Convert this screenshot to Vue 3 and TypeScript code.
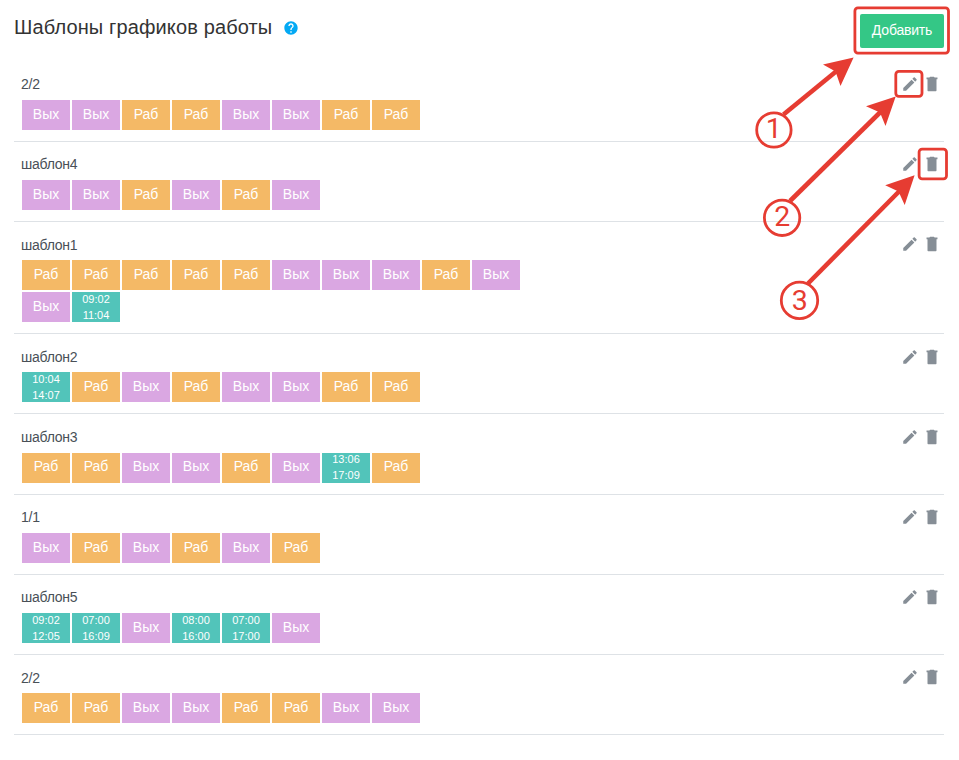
<script setup lang="ts">
type Shift = string

interface Template {
  name: string
  shifts: Shift[]
}

const OFF = 'Вых'
const WORK = 'Раб'

const templates: Template[] = [
  { name: '2/2', shifts: [OFF, OFF, WORK, WORK, OFF, OFF, WORK, WORK] },
  { name: 'шаблон4', shifts: [OFF, OFF, WORK, OFF, WORK, OFF] },
  {
    name: 'шаблон1',
    shifts: [WORK, WORK, WORK, WORK, WORK, OFF, OFF, OFF, WORK, OFF, OFF, '09:02 11:04'],
  },
  { name: 'шаблон2', shifts: ['10:04 14:07', WORK, OFF, WORK, OFF, OFF, WORK, WORK] },
  { name: 'шаблон3', shifts: [WORK, WORK, OFF, OFF, WORK, OFF, '13:06 17:09', WORK] },
  { name: '1/1', shifts: [OFF, WORK, OFF, WORK, OFF, WORK] },
  {
    name: 'шаблон5',
    shifts: ['09:02 12:05', '07:00 16:09', OFF, '08:00 16:00', '07:00 17:00', OFF],
  },
  { name: '2/2', shifts: [WORK, WORK, OFF, OFF, WORK, WORK, OFF, OFF] },
]

function kind(shift: Shift): string {
  if (shift === OFF) return 'off'
  if (shift === WORK) return 'work'
  return 'time'
}
</script>

<template>
  <main class="page">
    <header class="header">
      <h1 class="title">Шаблоны графиков работы</h1>
      <svg class="help" viewBox="0 0 24 24">
        <path
          d="M12 2C6.48 2 2 6.48 2 12s4.48 10 10 10 10-4.48 10-10S17.520 2 12 2zm1 17h-2v-2h2v2zm2.070-7.750l-.9.920C13.450 12.900 13 13.500 13 15h-2v-.5c0-1.100.450-2.100 1.170-2.830l1.240-1.260c.370-.360.590-.860.590-1.410 0-1.100-.9-2-2-2s-2 .9-2 2H8c0-2.210 1.790-4 4-4s4 1.790 4 4c0 .880-.360 1.680-.930 2.250z"
        />
      </svg>
      <button class="add" type="button">Добавить</button>
    </header>

    <ul class="list">
      <li v-for="(item, i) in templates" :key="i" class="row">
        <div class="info">
          <div class="name">{{ item.name }}</div>
          <div class="shifts">
            <div v-for="(shift, j) in item.shifts" :key="j" class="shift" :class="kind(shift)">
              <span v-for="part in shift.split(' ')" :key="part">{{ part }}</span>
            </div>
          </div>
        </div>
        <div class="actions">
          <svg class="icon" viewBox="0 0 24 24">
            <path
              d="M3 17.250V21h3.750L17.810 9.940l-3.750-3.750L3 17.250zM20.710 7.040c.390-.390.390-1.020 0-1.410l-2.340-2.340c-.390-.390-1.020-.390-1.410 0l-1.830 1.830 3.750 3.750 1.830-1.830z"
            />
          </svg>
          <svg class="icon" viewBox="0 0 24 24">
            <path
              d="M6 20.500c0 .6.400 1 1 1h10c.6 0 1-.4 1-1V5.500H6v15zM19.300 3.300h-3.800l-1-1h-5l-1 1H4.700v2.500h14.600V3.300z"
            />
          </svg>
        </div>
      </li>
    </ul>

    <svg class="callouts" viewBox="0 0 959 760">
      <g class="outline">
        <rect x="854.9" y="7.9" width="93.600" height="45.200" rx="3" />
        <rect x="895.8" y="71.400" width="26.200" height="24.900" rx="3" />
        <rect x="919.100" y="149.100" width="27.400" height="29.700" rx="3" />
        <circle cx="773.900" cy="130" r="17.200" />
        <circle cx="782.100" cy="217.800" r="17.700" />
        <circle cx="799.500" cy="300.400" r="18.200" />
      </g>
      <g class="shaft">
        <path d="M783.500 114.500L836 71.500" />
        <path d="M790 201L881 111.500" />
        <path d="M808 283.500L900 190.500" />
      </g>
      <g class="head">
        <path d="M853.600 57.400L823 64.500L835.500 71.500L840.500 86Z" />
        <path d="M895.700 96.600L866 106.300L880 112.500L885.500 126Z" />
        <path d="M914.600 175.300L885.200 185.300L898.500 191.500L904.700 205Z" />
      </g>
      <text x="773.800" y="138">1</text>
      <text x="782.200" y="226">2</text>
      <text x="799.700" y="309.500">3</text>
    </svg>
  </main>
</template>

<style>
body {
  margin: 0;
  background: #fff;
}
</style>

<style scoped>
.page {
  position: relative;
  box-sizing: border-box;
  height: 760px;
  padding: 0 15px 0 14px;
  overflow: hidden;
  font-family: "Liberation Sans", Arial, sans-serif;
}

.header {
  display: flex;
  align-items: center;
  box-sizing: border-box;
  height: 61.6px;
  padding-bottom: 6px;
}

.title {
  margin: -2px 0 0;
  font-size: 20px;
  font-weight: 400;
  line-height: 24px;
  letter-spacing: 0.13px;
  color: #333;
}

.help {
  width: 16px;
  height: 16px;
  margin-left: 10.5px;
  fill: #03a9f4;
}

.add {
  width: 84px;
  height: 34px;
  margin: 6px 0 0 auto;
  padding: 0 0 2px;
  border: 0;
  border-radius: 2px;
  background: #34c786;
  color: #fff;
  font: 14px "Liberation Sans", Arial, sans-serif;
  letter-spacing: -0.2px;
}

.list {
  margin: 0;
  padding: 0;
  list-style: none;
}

.row {
  display: flex;
  justify-content: space-between;
  box-sizing: border-box;
  min-height: 80.22px;
  padding: 12.500px 3px 10.900px 7px;
  border-bottom: 1px solid #dee2e6;
}

.name {
  height: 25.75px;
  font-size: 14px;
  line-height: 21px;
  letter-spacing: -0.25px;
  color: #495057;
}

.shifts {
  display: flex;
  flex-wrap: wrap;
  gap: 2px;
  width: 500px;
  padding-left: 1px;
}

.shift {
  display: flex;
  flex-direction: column;
  align-items: center;
  box-sizing: border-box;
  width: 48px;
  height: 30px;
  color: #fff;
  font-size: 14px;
  line-height: 28px;
}

.shift span {
  margin-top: -0.35px;
}

.off {
  background: #daa7e2;
}

.work {
  background: #f4b966;
}

.time {
  background: #52c4ba;
  font-size: 11px;
  line-height: 16.3px;
}

.time span:first-child {
  margin-top: -1.3px;
}

.actions {
  display: flex;
  gap: 4.5px;
  height: 18px;
  padding-top: 0.9px;
}

.icon {
  width: 18px;
  height: 18px;
  fill: #868e96;
}

.callouts {
  position: absolute;
  top: 0;
  left: 0;
  width: 959px;
  height: 760px;
  pointer-events: none;
}

.outline {
  fill: none;
  stroke: #e63c32;
  stroke-width: 2.8;
}

.shaft {
  stroke: #e63c32;
  stroke-width: 4.6;
}

.head,
.callouts text {
  fill: #e63c32;
}

.callouts text {
  font-family: Roboto, "Liberation Sans", sans-serif;
  font-size: 28.5px;
  text-anchor: middle;
}
</style>
